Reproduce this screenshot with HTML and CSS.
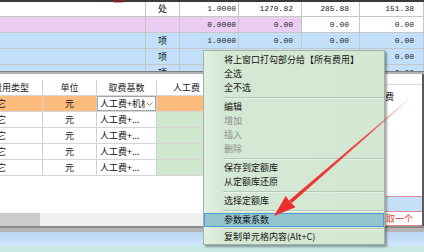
FILE: index.html
```html
<!DOCTYPE html>
<html lang="zh-CN">
<head>
    <meta charset="UTF-8">
    <title>取费设置</title>
    <link rel="stylesheet" href="styles.css">
</head>
<body>
    <div class="screen">
        <div class="topbar"></div>

        <div class="upper">
            <div class="urow">
                <span class="cell"></span>
                <span class="cell unit">处</span>
                <span class="cell num qty">1.0000</span>
                <span class="cell num ca">1270.82</span>
                <span class="cell num cb">285.88</span>
                <span class="cell num cc">151.38</span>
            </div>
            <div class="urow pink">
                <span class="cell"></span>
                <span class="cell unit"></span>
                <span class="cell num qty">0.0000</span>
                <span class="cell num ca">0.00</span>
                <span class="cell num cb plain">0.00</span>
                <span class="cell num cc plain">0.00</span>
            </div>
            <div class="urow blue">
                <span class="cell"></span>
                <span class="cell unit">项</span>
                <span class="cell num qty">1.0000</span>
                <span class="cell num ca">0.00</span>
                <span class="cell num cb">0.00</span>
                <span class="cell num cc">0.00</span>
            </div>
            <div class="urow blue">
                <span class="cell"></span>
                <span class="cell unit">项</span>
                <span class="cell num qty">1.0000</span>
                <span class="cell num ca">0.00</span>
                <span class="cell num cb">0.00</span>
                <span class="cell num cc">0.00</span>
            </div>
            <div class="urow blue">
                <span class="cell"></span>
                <span class="cell unit">项</span>
                <span class="cell num qty">1.0000</span>
                <span class="cell num ca">0.00</span>
                <span class="cell num cb">0.00</span>
                <span class="cell num cc">0.00</span>
            </div>
        </div>

        <div class="splitter"></div>

        <div class="lower">
            <div class="lower-left">
                <div class="sub">
                    <div class="srow head">
                        <span class="kind">费用类型</span>
                        <span>单位</span>
                        <span>取费基数</span>
                        <span>人工费</span>
                        <span>材料费</span>
                        <span>机械费</span>
                    </div>
                    <div class="srow current">
                        <span class="kind">其它</span>
                        <span>元</span>
                        <span class="base">
                            <div class="combo">
                                <span class="combo-text">人工费+机械费</span>
                                <svg class="chev" width="7" height="4" viewBox="0 0 7 4"><path d="M0.5 0.5 L3.5 3.5 L6.5 0.5" fill="none" stroke="#8a8a8a" stroke-width="1"/></svg>
                            </div>
                        </span>
                        <span class="labor"></span>
                        <span></span>
                        <span></span>
                    </div>
                    <div class="srow">
                        <span class="kind">其它</span>
                        <span>元</span>
                        <span class="base">人工费+...</span>
                        <span class="labor"></span>
                        <span></span>
                        <span></span>
                    </div>
                    <div class="srow">
                        <span class="kind">其它</span>
                        <span>元</span>
                        <span class="base">人工费+...</span>
                        <span class="labor"></span>
                        <span></span>
                        <span></span>
                    </div>
                    <div class="srow">
                        <span class="kind">其它</span>
                        <span>元</span>
                        <span class="base">人工费+...</span>
                        <span class="labor"></span>
                        <span></span>
                        <span></span>
                    </div>
                    <div class="srow">
                        <span class="kind">其它</span>
                        <span>元</span>
                        <span class="base">人工费+...</span>
                        <span class="labor"></span>
                        <span></span>
                        <span></span>
                    </div>
                </div>
                <div class="blank"></div>
                <div class="hscroll"><div class="thumb"></div></div>
            </div>

            <div class="lower-right">
                <div class="lr-head"><span>人工费</span></div>
                <div class="blank"></div>
                <div class="lr-band"></div>
                <div class="lr-hit">取一个</div>
            </div>
        </div>

        <div class="status-line"></div>
        <div class="taskbar"></div>
        <div class="tray"></div>

        <!-- right-click menu -->
        <div class="menu">
            <div class="mi">将上窗口打勾部分给【所有费用】</div>
            <div class="mi">全选</div>
            <div class="mi">全不选</div>
            <div class="sep"></div>
            <div class="mi">编辑</div>
            <div class="mi off">增加</div>
            <div class="mi off">插入</div>
            <div class="mi off">删除</div>
            <div class="sep"></div>
            <div class="mi">保存到定额库</div>
            <div class="mi">从定额库还原</div>
            <div class="sep"></div>
            <div class="mi">选择定额库</div>
            <div class="sep"></div>
            <div class="mi hot">参数乘系数</div>
            <div class="sep thin"></div>
            <div class="mi">复制单元格内容(Alt+C)</div>
        </div>

        <svg class="arrow" width="424" height="252" viewBox="0 0 424 252">
            <defs>
                <linearGradient id="fade" gradientUnits="userSpaceOnUse" x1="408" y1="100" x2="290" y2="202">
                    <stop offset="0" stop-color="#f04040" stop-opacity="0.15"/>
                    <stop offset="0.35" stop-color="#ee3434" stop-opacity="0.85"/>
                    <stop offset="1" stop-color="#ec2e2e"/>
                </linearGradient>
            </defs>
            <polygon points="110,0 128,0 123,2.5 114,2.5" fill="#7a2424" opacity="0.8"/>
            <polygon points="407.7,99.7 408.3,100.3 291.8,203 289.4,200.2" fill="url(#fade)"/>
            <polygon points="274,216 285.7,195.9 289,200.6 295.5,207.3" fill="#ec2e2e"/>
        </svg>
    </div>
</body>
</html>
```

FILE: styles.css
```css
* {
    margin: 0;
    padding: 0;
    box-sizing: border-box;
}

body {
    width: 424px;
    height: 252px;
    overflow: hidden;
    background-color: #ffffff;
    color: #111111;
    font-family: "Noto Sans CJK SC", "Noto Sans", sans-serif;
    font-size: 9px;
}

.screen {
    position: relative;
    width: 424px;
    height: 252px;
    display: flex;
    flex-direction: column;
}

.topbar {
    flex: none;
    height: 2px;
    background-color: #3a3a3a;
}

/* upper grid */
.upper {
    flex: none;
    height: 69px;
    overflow: hidden;
}

.urow {
    display: grid;
    grid-template-columns: 146px 34px 59px 63px 58px 64px;
    height: 16px;
}

.urow:first-child {
    height: 15px;
}

.cell {
    border-right: 1px solid #c6c6c6;
    border-bottom: 1px solid #c6c6c6;
    line-height: 15px;
    white-space: nowrap;
    overflow: hidden;
}

.urow:first-child .cell {
    line-height: 14px;
}

.unit {
    text-align: center;
}

.num {
    font-family: "Liberation Mono", monospace;
    font-size: 8px;
    text-align: right;
    color: #222222;
}

.qty { padding-right: 2px; }
.ca { padding-right: 8px; }
.cb { padding-right: 10px; }
.cc { padding-right: 9px; }

.pink .cell {
    background-color: #ebcdf1;
}

.pink .cell.plain {
    background-color: #ffffff;
}

.blue .cell {
    background-color: #c2dff9;
}

.splitter {
    flex: none;
    height: 3px;
    background-color: #b2b2b2;
    border-top: 1px solid #808080;
}

/* lower panels */
.lower {
    flex: none;
    height: 152px;
    display: flex;
}

.lower-left {
    flex: 1;
    min-width: 0;
    display: flex;
    flex-direction: column;
    overflow: hidden;
    padding-top: 6px;
}

.sub {
    margin-left: -20px;
}

.srow {
    display: grid;
    grid-template-columns: 63px 54px 60px 60px 60px 60px;
    height: 16px;
}

.srow > span {
    border-right: 1px solid #d2d2d2;
    border-bottom: 1px solid #d6d6d6;
    line-height: 15px;
    text-align: center;
    white-space: nowrap;
    overflow: hidden;
}

.srow .kind {
    text-align: left;
    padding-left: 8px;
}

.head > span {
    color: #222222;
}

.head .kind {
    text-align: center;
    padding-left: 0;
}

.srow .base {
    text-align: left;
    padding-left: 3px;
}

.srow .labor {
    background-color: #cfe7cf;
}

.srow.current > span {
    background-color: #fdbb7d;
}

.srow.current .base {
    padding-left: 0;
    background-color: #ffffff;
}

.combo {
    display: flex;
    align-items: center;
    height: 15px;
    border: 1px solid #a4a4a4;
    background-color: #ffffff;
    padding-left: 2px;
    padding-right: 2px;
}

.combo-text {
    flex: 1;
    overflow: hidden;
    white-space: nowrap;
    line-height: 13px;
}

.chev {
    flex: none;
    margin-left: 1px;
}

.blank {
    flex: 1;
}

.hscroll {
    flex: none;
    height: 13px;
    background-color: #efefef;
}

.thumb {
    width: 40px;
    height: 100%;
    background-color: #cbcbcb;
}

.lower-right {
    flex: none;
    width: 38px;
    display: flex;
    flex-direction: column;
    border-right: 2px solid #5c5c5c;
}

.lr-head {
    margin-top: 10px;
    height: 20px;
    border-top: 1px solid #dadada;
    line-height: 24px;
    white-space: nowrap;
    overflow: hidden;
}

.lr-head span {
    margin-left: -19px;
}

.lr-band {
    height: 16px;
    background-color: #c5e0f8;
    border-top: 1px solid #d98a96;
    border-bottom: 1px solid #d98a96;
}

.lr-hit {
    height: 14px;
    line-height: 13px;
    color: #e23a3a;
    border-bottom: 1px solid #e08a8a;
    white-space: nowrap;
}

.status-line {
    flex: none;
    height: 6px;
    background-color: #b4b4b4;
    border-top: 2px solid #8a8a8a;
}

.taskbar {
    flex: none;
    height: 14px;
    background: linear-gradient(#b9d6f5, #d0e6fb);
}

.tray {
    flex: 1;
    background-color: #c8e8e4;
}

/* context menu */
.menu {
    position: absolute;
    left: 203px;
    top: 50px;
    width: 182px;
    padding-top: 2px;
    background: linear-gradient(90deg, #e2efe1 0, #d4e8d3 19px, #d3e7d3 100%);
    border: 1px solid #a3b3a3;
    box-shadow: 2px 2px 2px rgba(0, 0, 0, 0.35);
}

.mi {
    height: 14px;
    line-height: 14px;
    padding-left: 20px;
    white-space: nowrap;
    color: #151515;
}

.mi.off {
    color: #8e8e8e;
}

.mi.hot {
    background-color: #92c3cf;
    border: 1px solid #4c9ddb;
    line-height: 12px;
    padding-left: 19px;
}

.sep {
    height: 2px;
    margin: 2px 0 1px 19px;
    border-top: 1px solid #b6c8b6;
    border-bottom: 1px solid #e8f2e8;
}

.sep.thin {
    margin: 1px 0 0 19px;
}

.arrow {
    position: absolute;
    left: 0;
    top: 0;
    pointer-events: none;
}
```
